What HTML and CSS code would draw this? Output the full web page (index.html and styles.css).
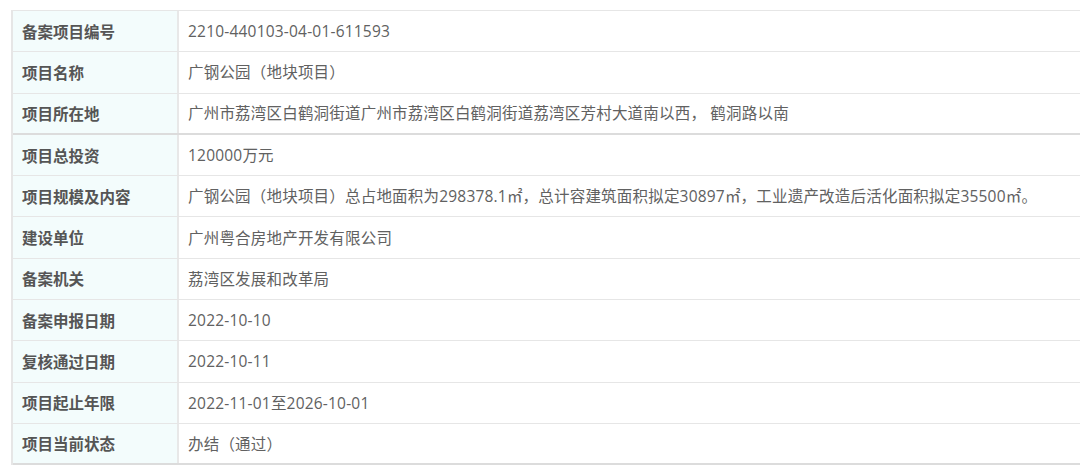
FILE: index.html
```html
<!DOCTYPE html>
<html lang="zh-CN">
<head>
<meta charset="utf-8">
<link rel="stylesheet" href="styles.css">
</head>
<body>
<div class="sheet">
  <div class="row"><div class="label">备案项目编号</div><div class="value">2210-440103-04-01-611593</div></div>
  <div class="row"><div class="label">项目名称</div><div class="value">广钢公园（地块项目）</div></div>
  <div class="row row-split"><div class="label">项目所在地</div><div class="value">广州市荔湾区白鹤洞街道广州市荔湾区白鹤洞街道荔湾区芳村大道南以西， 鹤洞路以南</div></div>
  <div class="row"><div class="label">项目总投资</div><div class="value">120000万元</div></div>
  <div class="row"><div class="label">项目规模及内容</div><div class="value">广钢公园（地块项目）总占地面积为298378.1㎡，总计容建筑面积拟定30897㎡，工业遗产改造后活化面积拟定35500㎡。</div></div>
  <div class="row"><div class="label">建设单位</div><div class="value">广州粤合房地产开发有限公司</div></div>
  <div class="row"><div class="label">备案机关</div><div class="value">荔湾区发展和改革局</div></div>
  <div class="row"><div class="label">备案申报日期</div><div class="value">2022-10-10</div></div>
  <div class="row"><div class="label">复核通过日期</div><div class="value">2022-10-11</div></div>
  <div class="row"><div class="label">项目起止年限</div><div class="value">2022-11-01至2026-10-01</div></div>
  <div class="row row-last"><div class="label">项目当前状态</div><div class="value">办结（通过）</div></div>
</div>
</body>
</html>
```
FILE: styles.css
```css
html, body {
  margin: 0;
  padding: 0;
  background: #ffffff;
}
body {
  padding: 10px 0 0 11px;
  font-family: "Noto Sans CJK SC", sans-serif;
  font-size: 15.5px;
  overflow: hidden;
}
.sheet {
  display: flex;
  flex-direction: column;
  border-top: 1px solid #e6e6e6;
  border-left: 2px solid #e6e6e6;
}
.row {
  display: flex;
  height: 41.3px;
  border-bottom: 1px solid #e6e6e6;
  box-sizing: border-box;
}
.row-split {
  border-bottom: 2px solid #dcdcdc;
}
.row-last {
  border-bottom: 2px solid #dcdcdc;
}
.label {
  flex: none;
  width: 166px;
  background: #f3fcfc;
  border-right: 2px solid #e8e8e8;
  color: #555555;
  font-weight: bold;
  display: flex;
  align-items: center;
  padding-left: 9px;
  padding-bottom: 1px;
  box-sizing: border-box;
}
.value {
  flex: 1;
  display: flex;
  align-items: center;
  padding-left: 9px;
  padding-bottom: 1px;
  color: #616161;
  white-space: nowrap;
  font-family: "Open Sans", "Noto Sans CJK SC", sans-serif;
  letter-spacing: 0.2px;
}
```
